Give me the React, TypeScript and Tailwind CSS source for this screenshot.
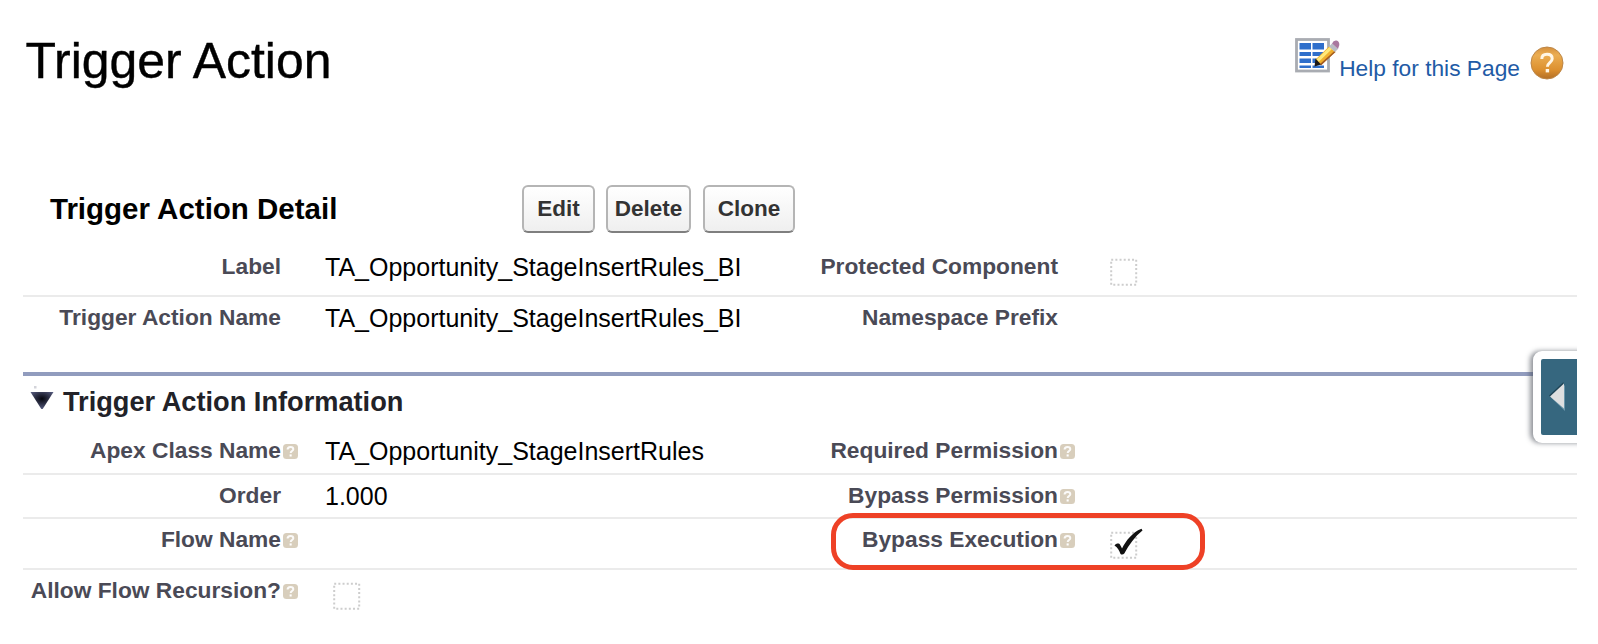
import type { ReactNode } from "react";

function HelpDot() {
  return (
    <svg width="15" height="15" viewBox="0 0 15 15" className="block">
      <rect width="15" height="15" rx="3.500" fill="#d8cebc" />
      <path d="M4.600 5.600C4.600 3.600 6 3 7.500 3s2.800.7 2.800 2.200c0 1.800-2.600 1.900-2.600 3.800" fill="none" stroke="#fff" strokeWidth="2" strokeOpacity=".9" />
      <rect x="6.600" y="10.400" width="2.100" height="2.100" fill="#fff" />
    </svg>
  );
}

function CheckBox({ checked = false }: { checked?: boolean }) {
  return (
    <svg width="36" height="34" viewBox="0 0 36 34" className="block">
      <rect x="1.2" y="4.700" width="25" height="25" fill="none" stroke="#cdcdcd" strokeWidth="2" strokeDasharray="2 2.17" />
      {checked && (
        <path d="M4.500 17.500C6.500 15 9.200 15 10.200 17c.8 1.400 1.200 2.200 1.800 3.400C16 13 22 4.500 31.500.8l1 1.700C25 8.500 19 16.500 14.300 25.500c-1 1.400-3.200 1.500-3.900.2C9 22.500 8 19.500 4.500 17.500Z" fill="#111" />
      )}
    </svg>
  );
}

type FieldProps = { label: string; help?: boolean; children?: ReactNode };

function Field({ label, help, children }: FieldProps) {
  return (
    <div className="flex items-start">
      <div className="w-[258px] shrink-0 pt-[6px] text-right text-[22.75px] leading-[28px] font-bold whitespace-nowrap text-[#4a4a56]">
        {label}
      </div>
      <div className="w-[44px] shrink-0 pt-[14px] pl-[2px]">{help && <HelpDot />}</div>
      {children}
    </div>
  );
}

function Value({ children }: { children: ReactNode }) {
  return <div className="pt-[7px] text-[25px] leading-[28px] whitespace-nowrap text-black">{children}</div>;
}

function Row({ height, line = true, left, right }: { height: string; line?: boolean; left: ReactNode; right?: ReactNode }) {
  return (
    <div className={`grid grid-cols-[777px_777px] ${height} ${line ? "border-b-2 border-[#ebebeb]" : ""}`}>
      {left}
      {right}
    </div>
  );
}

function ActionButton({ width, children }: { width: string; children: string }) {
  return (
    <button className={`${width} h-[48px] rounded-[6px] border-2 border-[#b5b5b5] border-b-[#7f7f7f] bg-linear-to-b from-white to-[#efefef] text-[22.5px] leading-[28px] font-bold text-[#333]`}>
      {children}
    </button>
  );
}

function LayoutIcon() {
  return (
    <svg width="45" height="36" viewBox="0 0 45 36" className="block">
      <rect x="1.500" y="2.500" width="32" height="31.500" fill="#fff" stroke="#a9acb2" strokeWidth="2.800" />
      <g fill="#2f6fcb">
        <rect x="4.500" y="6" width="11.500" height="6.500" />
        <rect x="17.500" y="6" width="11.500" height="6.500" />
        <rect x="4.500" y="15" width="11.500" height="4" />
        <rect x="17.500" y="15" width="11.500" height="4" />
        <rect x="4.500" y="21.500" width="11.500" height="4.500" />
        <rect x="17.500" y="21.500" width="8" height="4.500" />
        <rect x="4.500" y="28.500" width="11.500" height="2.500" />
        <rect x="17.500" y="28.500" width="11.500" height="2.500" />
      </g>
      <path d="M20.500 22.500L34 9.500l6.500 5.500L26 28Z" fill="#f0b02e" />
      <path d="M21.500 22.500L34.500 10l2.500 2L23.500 25Z" fill="#ffe97a" />
      <path d="M25 27L39.500 14l1 1L26 28.500Z" fill="#a35a22" />
      <path d="M20.500 21.500l5.500 6-6.500 2Z" fill="#1c1712" />
      <path d="M34 9.500L37 6.500l6 5.500-3 3Z" fill="#b9bcc4" />
      <path d="M37 6.500q1.500-3.500 4.500-3t2.800 4.500l-1.300 4Z" fill="#a9789f" />
    </svg>
  );
}

function HelpBall() {
  return (
    <svg width="34" height="34" viewBox="0 0 34 34" className="block">
      <defs>
        <linearGradient id="ball" x1="0" y1="0" x2="0" y2="1">
          <stop offset="0" stopColor="#d58f3c" />
          <stop offset=".25" stopColor="#ebad52" />
          <stop offset=".7" stopColor="#dd9130" />
          <stop offset="1" stopColor="#b36e26" />
        </linearGradient>
      </defs>
      <circle cx="17" cy="17" r="16" fill="url(#ball)" stroke="#bd8748" strokeWidth="1" />
      <path d="M11.800 13c0-3.200 2.200-4.700 5.200-4.700s5.200 1.500 5.200 4.400c0 3.800-4.800 4-4.800 8" fill="none" stroke="#fff6e6" strokeWidth="3" />
      <rect x="15.700" y="23" width="3.400" height="3.400" fill="#fff6e6" />
    </svg>
  );
}

export default function App() {
  return (
    <div className="relative flex h-[644px] w-[1598px] flex-col overflow-hidden bg-white pl-[23px] font-['Liberation_Sans',Arial,sans-serif]">
      <header className="flex h-[185px] w-[1554px] items-start justify-between">
        <h1 className="pt-[32px] pl-[2.500px] text-[49.9px] leading-[58px] text-black [-webkit-text-stroke:0.4px_black]">Trigger Action</h1>
        <div className="flex items-start pr-[13px]">
          <div className="w-[44px] pt-[37px]"><LayoutIcon /></div>
          <a className="pt-[54px] pr-[10px] text-[22.75px] leading-[28px] whitespace-nowrap text-[#1f5ba6]">Help for this Page</a>
          <div className="pt-[46px]"><HelpBall /></div>
        </div>
      </header>

      <div className="flex h-[61px] items-start">
        <h2 className="w-[499px] pt-[7px] pl-[27px] text-[29.5px] leading-[34px] font-bold text-black">Trigger Action Detail</h2>
        <div className="flex">
          <ActionButton width="mr-[11px] w-[73px]">Edit</ActionButton>
          <ActionButton width="mr-[12px] w-[85px]">Delete</ActionButton>
          <ActionButton width="w-[92px]">Clone</ActionButton>
        </div>
      </div>

      <section className="w-[1554px]">
        <Row
          height="h-[51px]"
          left={<Field label="Label"><Value>TA_Opportunity_StageInsertRules_BI</Value></Field>}
          right={<Field label="Protected Component"><div className="pt-[9px] pl-[8px]"><CheckBox /></div></Field>}
        />
        <Row
          height="h-[75px]"
          line={false}
          left={<Field label="Trigger Action Name"><Value>TA_Opportunity_StageInsertRules_BI</Value></Field>}
          right={<Field label="Namespace Prefix" />}
        />
      </section>

      <section className="w-[1554px] border-t-4 border-[#919cbe]">
        <div className="flex h-[54px] items-start pl-[7px]">
          <svg width="24" height="34" viewBox="0 0 24 34" className="block">
            <defs>
              <radialGradient id="tri" cx=".5" cy=".4" r=".6">
                <stop offset="0" stopColor="#05060e" />
                <stop offset="1" stopColor="#565b7e" />
              </radialGradient>
            </defs>
            <rect x="4" y="10" width="2.500" height="2.500" fill="#d3d4da" />
            <path d="M.5 16h23L12.700 33h-1.400Z" fill="url(#tri)" />
          </svg>
          <h3 className="pt-[10px] pl-[9px] text-[27.2px] leading-[32px] font-bold text-[#222228]">Trigger Action Information</h3>
        </div>
        <Row
          height="h-[45px]"
          left={<Field label="Apex Class Name" help><Value>TA_Opportunity_StageInsertRules</Value></Field>}
          right={<Field label="Required Permission" help />}
        />
        <Row
          height="h-[44px]"
          left={<Field label="Order"><Value>1.000</Value></Field>}
          right={<Field label="Bypass Permission" help />}
        />
        <Row
          height="h-[51px]"
          left={<Field label="Flow Name" help />}
          right={<Field label="Bypass Execution" help><div className="pt-[9px] pl-[8px]"><CheckBox checked /></div></Field>}
        />
        <Row
          height="h-[60px]"
          line={false}
          left={<Field label="Allow Flow Recursion?" help><div className="pt-[9px] pl-[8px]"><CheckBox /></div></Field>}
        />
      </section>

      <div className="absolute top-[513px] left-[831px] h-[57px] w-[374px] rounded-[22px] border-5 border-[#ee4126]" />

      <div className="absolute top-[341px] left-[1517px] h-[112px] w-[60px] overflow-hidden pt-[10px] pl-[16px]">
        <div className="h-[92px] w-[60px] rounded-[9px] bg-white py-[8px] pl-[8px] shadow-[-3px_0_5px_0px_rgba(70,75,85,0.6)]">
          <div className="flex h-[76px] items-center rounded-l-[2px] bg-[#36677f] pb-[2px] pl-[8px]">
            <svg width="20" height="32" viewBox="0 0 20 32" className="block">
              <path d="M14.500 2L0 15.500l14.500 13Z" fill="#1f4456" />
              <path d="M16 5L2 17.500 16 31Z" fill="#6b97ab" />
              <path d="M15 3.500L1 16.500l14 12Z" fill="#dedfe0" />
            </svg>
          </div>
        </div>
      </div>
    </div>
  );
}
